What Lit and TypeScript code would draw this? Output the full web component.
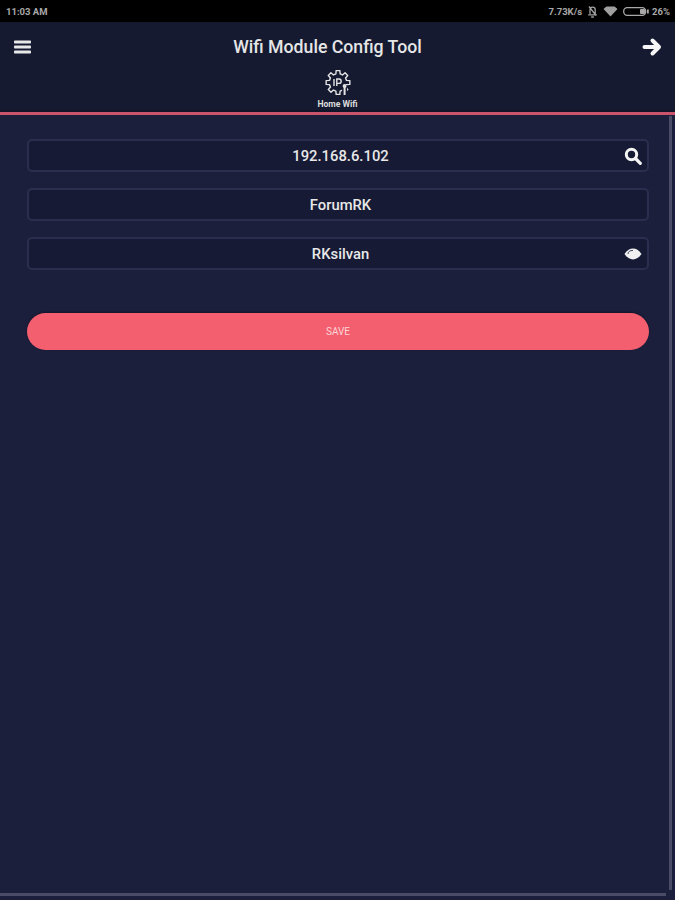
import { LitElement, html, css, svg } from "lit";
import { customElement } from "lit/decorators.js";

const gearPoints = () => {
    const out: string[] = [];
    const teeth = 8;
    for (let i = 0; i < teeth; i++) {
        const a = (i / teeth) * Math.PI * 2;
        const step = Math.PI / teeth;
        const pts = [
            [8.8, a - step * 0.62],
            [12, a - step * 0.4],
            [12, a + step * 0.4],
            [8.8, a + step * 0.62],
        ];
        for (const [r, t] of pts) {
            out.push(`${(13 + r * Math.cos(t)).toFixed(2)},${(12.5 + r * Math.sin(t)).toFixed(2)}`);
        }
    }
    return out.join(" ");
};

@customElement("app-root")
export class AppRoot extends LitElement {
    static styles = css`
        :host {
            display: block;
            position: relative;
            width: 675px;
            height: 900px;
            overflow: hidden;
            background: #1c1f3c;
            font-family: Roboto, "Liberation Sans", sans-serif;
            color: #f2f2f2;
        }
        .status {
            height: 22px;
            background: #000;
            display: flex;
            align-items: center;
            justify-content: space-between;
            padding: 0 5px 0 6px;
            font-size: 9.5px;
            font-weight: 700;
            color: #a8a8a8;
        }
        .status__right {
            display: flex;
            align-items: center;
            gap: 5px;
        }
        .status__right svg {
            display: block;
        }
        .status__pct {
            margin-left: -2px;
        }
        .header {
            height: 88px;
            background: #151a31;
            display: flex;
            flex-direction: column;
        }
        .header__top {
            height: 50px;
            display: flex;
            align-items: center;
            justify-content: space-between;
            padding: 0 13px 0 14px;
        }
        .header__top svg {
            display: block;
        }
        .title {
            font-size: 17.7px;
            font-weight: 500;
            color: #e6e6e6;
            margin-right: 18px;
        }
        .tab {
            display: flex;
            flex-direction: column;
            align-items: center;
            margin-top: -2px;
        }
        .tab svg {
            display: block;
        }
        .tab__label {
            font-size: 8.6px;
            font-weight: 700;
            line-height: 10px;
            margin-top: 3px;
            color: #dcdcdc;
        }
        .rule {
            height: 5px;
            box-sizing: border-box;
            background: #c9546b;
            border-top: 2px solid #121529;
        }
        .form {
            padding: 24px 26px 0 27px;
            display: flex;
            flex-direction: column;
            gap: 16px;
        }
        .field {
            height: 33px;
            box-sizing: border-box;
            position: relative;
            padding-left: 5px;
            border: 2px solid #2b2e4e;
            border-radius: 5px;
            background: #161a34;
            display: flex;
            align-items: center;
            justify-content: center;
            font-size: 14.8px;
            font-weight: 500;
            color: #e8e8e8;
        }
        .field__icon {
            position: absolute;
            right: 5px;
            top: 50%;
            transform: translateY(-50%);
            display: block;
        }
        .save {
            margin: 43px 26px 0 27px;
            height: 37px;
            border-radius: 19px;
            background: #f45f6f;
            display: flex;
            align-items: center;
            justify-content: center;
            font-size: 10px;
            color: #fbd5d8;
            box-shadow: 0 -1px 2px #12152b;
        }
        .scroll-v {
            position: absolute;
            left: 669px;
            top: 116px;
            bottom: 10px;
            width: 3px;
            background: #4a4c66;
        }
        .scroll-h {
            position: absolute;
            left: 0;
            bottom: 4px;
            width: 666px;
            height: 3px;
            background: #4a4c66;
        }
    `;

    render() {
        return html`
            <div class="status">
                <span>11:03 AM</span>
                <div class="status__right">
                    <span>7.73K/s</span>
                    <svg width="11" height="13" viewBox="0 0 11 13" fill="none" stroke="#a0a0a0" stroke-width="1.3">
                        <path d="M3 9V4.8a2.6 2.6 0 0 1 5.2 0V9M1.2 9.8h8.6M4.2 12h2.6M2 1.5l7 9" />
                    </svg>
                    <svg width="15" height="11" viewBox="0 0 15 11">
                        <path d="M0.5 3L3.5 0.5H11.5L14.5 3L7.5 10.5Z" fill="#a0a0a0" />
                    </svg>
                    <svg width="26" height="9" viewBox="0 0 26 9" fill="none">
                        <rect x="0.7" y="0.7" width="22" height="7.6" rx="3.5" stroke="#a8a8a8" stroke-width="1.3" />
                        <rect x="17" y="2" width="5" height="5" rx="1" fill="#a8a8a8" />
                        <rect x="24" y="2.5" width="1.8" height="4" fill="#a8a8a8" />
                    </svg>
                    <span class="status__pct">26%</span>
                </div>
            </div>
            <div class="header">
                <div class="header__top">
                    <svg width="17" height="14" viewBox="0 0 17 14" fill="#e8e8e8">
                        <rect y="0.5" width="17" height="3" rx="0.8" />
                        <rect y="5.5" width="17" height="3" rx="0.8" />
                        <rect y="10.5" width="17" height="3" rx="0.8" />
                    </svg>
                    <span class="title">Wifi Module Config Tool</span>
                    <svg width="20" height="20" viewBox="0 0 20 20" fill="none" stroke="#f6f6f6" stroke-width="4" stroke-linecap="round" stroke-linejoin="round">
                        <path d="M2.5 10H16M10.5 3.5l6.5 6.5-6.5 6.5" />
                    </svg>
                </div>
                <div class="tab">
                    <svg width="26" height="26" viewBox="0 0 26 26" fill="none" stroke="#e4e4e4">
                        ${svg`<polygon points=${gearPoints()} stroke-width="1.4" stroke-linejoin="round" />`}
                        <path d="M9 9v7M11.8 16V9h2.2a2.1 2.1 0 0 1 0 4.4h-2.2" stroke-width="1.4" />
                        <path d="M19.6 15v10" stroke="#151a31" stroke-width="5" />
                        <circle cx="19.6" cy="16" r="2" fill="#e4e4e4" stroke="none" />
                        <path d="M19.6 16v9" stroke-width="2" />
                    </svg>
                    <span class="tab__label">Home Wifi</span>
                </div>
            </div>
            <div class="rule"></div>
            <div class="form">
                <div class="field">
                    192.168.6.102
                    <svg class="field__icon" width="18" height="18" viewBox="0 0 18 18" fill="none" stroke="#f4f4f4">
                        <circle cx="7.5" cy="7.5" r="5.2" stroke-width="3" />
                        <path d="M11.5 11.5l4.8 4.8" stroke-width="3.2" stroke-linecap="round" />
                    </svg>
                </div>
                <div class="field">ForumRK</div>
                <div class="field">
                    RKsilvan
                    <svg class="field__icon" width="18" height="12" viewBox="0 0 18 12">
                        <path d="M0.5 6C3 2.2 6 0.6 9 0.6S15 2.2 17.5 6C15 9.8 12 11.4 9 11.4S3 9.8 0.5 6Z" fill="#f0f0f0" />
                        <path d="M4 6a5 3.8 0 0 1 5-3.6" fill="none" stroke="#161a34" stroke-width="0.8" />
                    </svg>
                </div>
            </div>
            <div class="save">SAVE</div>
            <div class="scroll-v"></div>
            <div class="scroll-h"></div>
        `;
    }
}
